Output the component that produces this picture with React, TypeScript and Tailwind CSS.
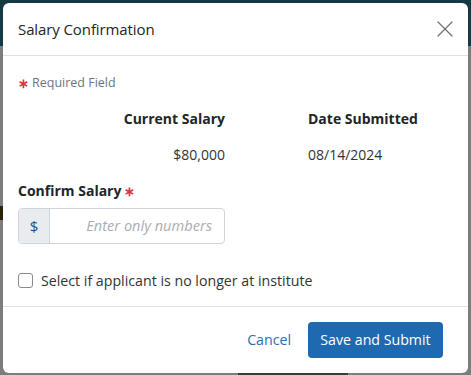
import { X } from 'lucide-react'

const font = { fontFamily: '"Open Sans", "Noto Sans", sans-serif' }

export default function App() {
  return (
    <div className="relative w-[471px] h-[375px] overflow-hidden bg-[#7d7d7d]" style={font}>
      {/* page behind the overlay */}
      <div className="h-[46px] bg-[#163a44]" />
      <div className="absolute left-0 top-[206px] w-[3px] h-[14px] bg-[#2a2208]" />
      <div className="absolute left-[238px] bottom-0 h-[2px] w-[110px] bg-[#3a3a3a]" />

      <div className="absolute left-[3px] top-[3px] w-[465px] h-[370px] bg-white rounded-[6px] flex flex-col">
        <div className="h-[53px] flex items-center justify-between pl-[15px] pr-[9px] border-b border-[#dee2e6]">
          <h2 className="text-[15px] text-[#212529] tracking-[-0.1px]">Salary Confirmation</h2>
          <button className="text-[#707070]">
            <X className="w-[28px] h-[28px]" strokeWidth={1.1} />
          </button>
        </div>

        <div className="flex-1 px-[15px] pt-[17px]">
          <div className="flex items-center gap-[3px] text-[12.5px] text-[#6c757d] leading-[20px]">
            <span className="text-[#dc3545] text-[13px] font-bold">∗</span>
            <span>Required Field</span>
          </div>

          <div className="grid grid-cols-[207px_218px] gap-x-[83px] mt-[16px] text-[14px] text-[#212529]">
            <div className="text-right font-bold leading-[20px]">Current Salary</div>
            <div className="font-bold leading-[20px]">Date Submitted</div>
            <div className="text-right mt-[16px] leading-[20px] text-[#333]">$80,000</div>
            <div className="mt-[16px] leading-[20px] text-[#333]">08/14/2024</div>
          </div>

          <div className="mt-[16px] flex items-center gap-[3px] text-[14px] font-bold text-[#212529] leading-[20px]">
            <span>Confirm Salary</span>
            <span className="text-[#dc3545] text-[13px]">∗</span>
          </div>

          <div className="mt-[7px] flex w-[207px] h-[36px] border border-[#ced4da] rounded-[4px] overflow-hidden">
            <div className="w-[31px] bg-[#e9ecef] border-r border-[#ced4da] flex items-center justify-center text-[15px] text-[#1e4f8a]">
              $
            </div>
            <input
              className="flex-1 min-w-0 px-[12px] text-right italic text-[14.6px] placeholder:text-[#a9aeb3] outline-none"
              placeholder="Enter only numbers"
            />
          </div>

          <label className="mt-[26px] flex items-center gap-[8px] text-[14.2px] text-[#333]">
            <span className="w-[15px] h-[15px] border border-[#8a8a8a] rounded-[3px] bg-white" />
            <span>Select if applicant is no longer at institute</span>
          </label>
        </div>

        <div className="h-[67px] border-t border-[#dee2e6] flex items-center justify-end gap-[17px] pr-[25px]">
          <button className="text-[14.2px] text-[#2b6cb5]">Cancel</button>
          <button className="h-[36px] w-[135px] rounded-[4px] bg-[#1f69b1] text-white text-[14.2px]">
            Save and Submit
          </button>
        </div>
      </div>
    </div>
  )
}
